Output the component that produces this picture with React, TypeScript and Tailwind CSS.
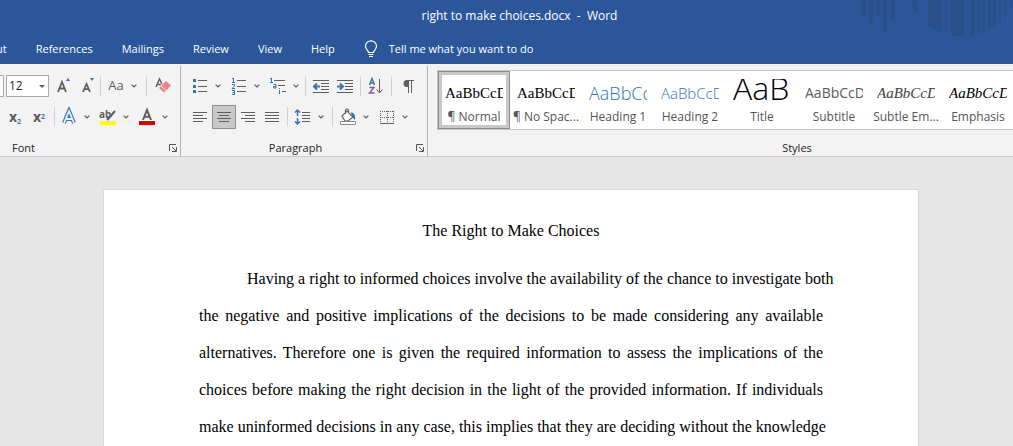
import type { ReactNode } from 'react';

const tabs = ['ut', 'References', 'Mailings', 'Review', 'View', 'Help'];

const styles = [
  { name: '¶ Normal', sample: 'AaBbCcD', look: 'font-["Liberation_Serif",serif] text-[15px] leading-7 text-black' },
  { name: '¶ No Spac...', sample: 'AaBbCcD', look: 'font-["Liberation_Serif",serif] text-[15px] leading-7 text-black' },
  { name: 'Heading 1', sample: 'AaBbCc', look: 'font-light text-[18px] leading-7 text-[#2e74b5]' },
  { name: 'Heading 2', sample: 'AaBbCcD', look: 'font-light text-[15px] leading-7 text-[#2e74b5]' },
  { name: 'Title', sample: 'AaB', look: 'font-light text-[32px] leading-[18px] text-black' },
  { name: 'Subtitle', sample: 'AaBbCcD', look: 'text-[14px] leading-7 text-[#5a5a5a]' },
  { name: 'Subtle Em...', sample: 'AaBbCcD', look: 'font-["Liberation_Serif",serif] italic text-[15px] leading-7 text-[#404040]' },
  { name: 'Emphasis', sample: 'AaBbCcD', look: 'font-["Liberation_Serif",serif] italic text-[15px] leading-7 text-black' },
];

const lines = [
  'Having a right to informed choices involve the availability of the chance to investigate both',
  'the negative and positive implications of the decisions to be made considering any available',
  'alternatives. Therefore one is given the required information to assess the implications of the',
  'choices before making the right decision in the light of the provided information. If individuals',
  'make uninformed decisions in any case, this implies that they are deciding without the knowledge',
];

const G = '#5f5f5f';
const B = '#3b73af';

function Icon({ children }: { children: ReactNode }) {
  return (
    <svg width="20" height="20" viewBox="0 0 20 20" fill="none" stroke={G} className="shrink-0">
      {children}
    </svg>
  );
}

function Tool({ label, active, children }: { label: string; active?: boolean; children: ReactNode }) {
  return (
    <button
      aria-label={label}
      className={`flex h-6 w-6 shrink-0 items-center justify-center ${active ? 'border border-[#8f8f8f] bg-[#c8c8c8]' : ''}`}
    >
      {children}
    </button>
  );
}

function Chevron({ label }: { label: string }) {
  return (
    <button aria-label={label} className="flex h-6 w-3 shrink-0 items-center justify-center">
      <svg width="6" height="4" viewBox="0 0 6 4" fill="none" stroke={G} strokeWidth="1.2">
        <path d="M.6.6 3 3 5.4.6" />
      </svg>
    </button>
  );
}

function Sep() {
  return <div className="h-5 w-px shrink-0 bg-[#d2d2d2]" />;
}

function Launcher({ label }: { label: string }) {
  return (
    <button aria-label={label} className="flex items-center">
      <svg width="8" height="8" viewBox="0 0 8 8" fill="none" stroke="#555">
        <path d="M.5 7V.5H7M3 3l4 4M7.5 3v4.5H3" />
      </svg>
    </button>
  );
}

// Horizontal text lines, given as [y, x1, x2]
function Lines({ rows }: { rows: number[][] }) {
  return <path d={rows.map(([y, a, b]) => `M${a} ${y}H${b}`).join('')} />;
}

function Art() {
  return (
    <svg width="152" height="38" viewBox="0 0 152 38" fill="#2a5089" aria-hidden="true" className="absolute top-0 right-0">
      <path d="M1 0h4v16H1zM8 0h4v23H8zM15 0h4v16h-4zM22 0h4v32h-4zM30 0h4v20h-4zM49 0h7v14l-3-4-1-5z" />
      <path d="M67 0h13v32l-13-6zM90 0h13v36H90zM110 0h4v35h-4zM116 0h3v34h-3zM121 0h3v32h-3zM127 0h3v29h-3zM132 0h3v27h-3zM138 0h2v23h-2zM143 0h2v18h-2zM149 0h2v10h-2z" />
      <path d="M82 0h6v34l-6-2z" opacity=".3" />
    </svg>
  );
}

function FontGroup() {
  return (
    <section className="flex w-[181px] shrink-0 flex-col border-r border-[#b4b4b4]">
      <div className="flex h-[39px] items-center">
        <div className="h-[22px] w-1 shrink-0 border border-l-0 border-[#ababab] bg-white" />
        <div className="relative ml-[2px] h-[22px] w-[43px] shrink-0">
          <select
            aria-label="Font size"
            className="h-full w-full appearance-none border border-[#ababab] bg-white pl-[2px] text-xs text-[#262626]"
          >
            <option>12</option>
          </select>
          <svg width="6" height="3" viewBox="0 0 6 3" fill={G} className="pointer-events-none absolute top-[10px] right-1">
            <path d="M0 0h6L3 3z" />
          </svg>
        </div>
        <div className="ml-[3px] flex">
          <Tool label="Increase font size">
            <Icon>
              <path d="M4 16 8 6l4 10M5.4 12.5h5.2" strokeWidth="1.8" />
              <path d="M12 5l2-3 2 3z" fill={B} stroke="none" />
            </Icon>
          </Tool>
          <Tool label="Decrease font size">
            <Icon>
              <path d="M5 16l3.5-8L12 16M6.2 13.2h4.6" strokeWidth="1.8" />
              <path d="M12 2l2 3 2-3z" fill={B} stroke="none" />
            </Icon>
          </Tool>
        </div>
        <Sep />
        <button aria-label="Change case" className="ml-[3px] h-6 w-6 text-[13px] text-[#5f5f5f]">
          Aa
        </button>
        <Chevron label="Change case options" />
        <div className="ml-[6px] flex items-center gap-1">
          <Sep />
          <Tool label="Clear formatting">
            <Icon>
              <path d="M3 11l3.5-8L9 8M4.2 8.5H8" strokeWidth="1.4" />
              <path d="M13 5l5 4.5-7 7L6 12z" fill="#e8828f" stroke="none" />
              <path d="M8 10l5 4.5" stroke="#fbe3e6" />
            </Icon>
          </Tool>
        </div>
      </div>
      <div className="flex h-6 items-center pl-[3px]">
        <button aria-label="Subscript" className="h-6 w-6 text-[14px] leading-6 font-bold text-[#5a5a5a]">
          x<sub className="text-[7px] text-[#3b73af]">2</sub>
        </button>
        <button aria-label="Superscript" className="mr-[3px] h-6 w-6 text-[14px] leading-6 font-bold text-[#5a5a5a]">
          x<sup className="text-[7px] text-[#3b73af]">2</sup>
        </button>
        <Sep />
        <div className="ml-[2px] flex">
          <Tool label="Text effects">
            <Icon>
              <path d="M5 16 10 4l5 12M7 12h6" stroke={B} strokeWidth="4" />
              <path d="M5 16 10 4l5 12M7 12h6" stroke="#e6eff9" strokeWidth="1.8" />
            </Icon>
          </Tool>
          <Chevron label="Text effects options" />
        </div>
        <div className="ml-[3px] flex">
          <Tool label="Highlight">
            <Icon>
              <text x="1" y="11" fontSize="10" fontWeight="bold" fill={G} stroke="none">ab</text>
              <path d="M17 4l-6 7-2 2" strokeWidth="2" />
              <path d="M2 14h16v4H2z" fill="#ff0" stroke="none" />
            </Icon>
          </Tool>
          <Chevron label="Highlight colours" />
        </div>
        <div className="ml-[3px] flex">
          <Tool label="Font colour">
            <Icon>
              <path d="M6 13l4-10 4 10M7.4 9.8h5.2" strokeWidth="2" />
              <path d="M2 14h16v4H2z" fill="#e00000" stroke="none" />
            </Icon>
          </Tool>
          <Chevron label="Font colours" />
        </div>
      </div>
      <div className="mt-[11px] flex h-4 items-center justify-between pr-[3px] pl-3">
        <h2>Font</h2>
        <Launcher label="Font settings" />
      </div>
    </section>
  );
}

function ParagraphGroup() {
  return (
    <section className="flex w-[247px] shrink-0 flex-col border-r border-[#b4b4b4]">
      <div className="flex h-[39px] items-center gap-[3px] pl-[7px]">
        <div className="flex">
          <Tool label="Bullets">
            <Icon>
              <Lines rows={[[4.5, 8, 17], [10.5, 8, 17], [15.5, 8, 17]]} />
              <path d="M3 3h3v3H3zM3 9h3v3H3zM3 14h3v3H3z" fill={B} stroke="none" />
            </Icon>
          </Tool>
          <Chevron label="Bullet library" />
        </div>
        <div className="flex">
          <Tool label="Numbering">
            <Icon>
              <Lines rows={[[4.5, 8, 17], [10.5, 8, 17], [15.5, 8, 17]]} />
              <path d="M3 3l1.5-1v4M3 6.5h3M3 8.5h2.5V10L3 12.5h3M3 14.5h2.5v4H3M3.5 16.5h2" stroke={B} />
            </Icon>
          </Tool>
          <Chevron label="Numbering library" />
        </div>
        <div className="flex">
          <Tool label="Multilevel list">
            <Icon>
              <Lines rows={[[4.5, 6, 17], [9.5, 10, 17], [15.5, 14, 18]]} />
              <path d="M2 3l1.5-1v4M2 6.5h3M5.5 8.5H8V12H5.5v-1.5H8M11.5 14v4M11.5 12v1" stroke={B} />
            </Icon>
          </Tool>
          <Chevron label="Multilevel library" />
        </div>
        <Sep />
        <div className="flex">
          <Tool label="Decrease indent">
            <Icon>
              <Lines rows={[[4.5, 2, 18], [7.5, 10, 18], [10.5, 10, 18], [13.5, 10, 18], [16.5, 2, 18]]} />
              <path d="M9 10.5H3M6 7.5l-3 3 3 3" stroke={B} strokeWidth="2" />
            </Icon>
          </Tool>
          <Tool label="Increase indent">
            <Icon>
              <Lines rows={[[4.5, 2, 18], [7.5, 10, 18], [10.5, 10, 18], [13.5, 10, 18], [16.5, 2, 18]]} />
              <path d="M2 10.5h6M5 7.5l3 3-3 3" stroke={B} strokeWidth="2" />
            </Icon>
          </Tool>
        </div>
        <Sep />
        <Tool label="Sort">
          <Icon>
            <path d="M3.5 9 6 2.5 8.5 9M4.5 7h3" stroke={B} strokeWidth="1.4" />
            <path d="M3.5 11.5H8L3.5 17h5" stroke="#8a52a8" strokeWidth="1.4" />
            <path d="M13.5 3v14M10.5 13.5l3 3.5 3-3.5" />
          </Icon>
        </Tool>
        <Sep />
        <Tool label="Show marks">
          <Icon>
            <path d="M11.5 4v13M14.5 4v13M10 4.5h7" />
            <path d="M11.5 4H10a3.5 3.5 0 0 0 0 7h1.5z" fill={G} stroke="none" />
          </Icon>
        </Tool>
      </div>
      <div className="flex h-6 items-center gap-[3px] pl-[7px]">
        <div className="flex">
          <Tool label="Align left">
            <Icon><Lines rows={[[5.5, 3, 17], [8.5, 3, 13], [11.5, 3, 17], [14.5, 3, 13]]} /></Icon>
          </Tool>
          <Tool label="Center" active>
            <Icon><Lines rows={[[5.5, 3, 17], [8.5, 5, 15], [11.5, 3, 17], [14.5, 5, 15]]} /></Icon>
          </Tool>
          <Tool label="Align right">
            <Icon><Lines rows={[[5.5, 3, 17], [8.5, 7, 17], [11.5, 3, 17], [14.5, 7, 17]]} /></Icon>
          </Tool>
          <Tool label="Justify">
            <Icon><Lines rows={[[5.5, 3, 17], [8.5, 3, 17], [11.5, 3, 17], [14.5, 3, 17]]} /></Icon>
          </Tool>
        </div>
        <Sep />
        <div className="mr-[2px] flex">
          <Tool label="Line spacing">
            <Icon>
              <Lines rows={[[5.5, 9, 17], [8.5, 9, 17], [11.5, 9, 17], [14.5, 9, 17]]} />
              <path d="M4.5 3v6M2 5.5 4.5 3 7 5.5M4.5 11v6M2 14.5 4.5 17 7 14.5" stroke={B} strokeWidth="1.5" />
            </Icon>
          </Tool>
          <Chevron label="Line spacing options" />
        </div>
        <Sep />
        <div className="flex">
          <Tool label="Shading">
            <Icon>
              <path d="M4 9l5-5 6 6-5 4H7zM7.5 7V3q1.5-2 3 0v3" fill="#fff" strokeWidth="1.2" />
              <path d="M13 5q5 1 4 8l-3-3z" fill={B} stroke="none" />
              <path d="M2.5 14.5h15v3h-15z" fill="#fff" stroke="#8a8a8a" />
            </Icon>
          </Tool>
          <Chevron label="Shading colours" />
        </div>
        <div className="flex">
          <Tool label="Borders">
            <Icon>
              <path d="M3 4.5h14M3 10.5h14M3.5 4v12M10.5 4v12M16.5 4v12" strokeDasharray="1 1" />
              <path d="M3 16.5h14" />
            </Icon>
          </Tool>
          <Chevron label="Border options" />
        </div>
      </div>
      <div className="mt-[11px] flex h-4 items-center pr-[3px]">
        <h2 className="flex-1 pr-[6px] text-center">Paragraph</h2>
        <Launcher label="Paragraph settings" />
      </div>
    </section>
  );
}

function StylesGroup() {
  return (
    <section className="flex w-[729px] shrink-0 flex-col pl-[9px]">
      <div className="mt-1 flex h-[60px] border border-r-0 border-[#c6c6c6] bg-white">
        {styles.map((s, i) => (
          <button
            key={s.name}
            className={`flex w-[72px] shrink-0 flex-col items-center ${
              i === 0 ? 'shadow-[inset_0_0_0_1px_#8c8c8c,inset_0_0_0_4px_#c8c8c8]' : ''
            }`}
          >
            <span className={`mt-2 h-7 w-[58px] overflow-hidden text-left ${s.look}`}>{s.sample}</span>
            <span className="text-xs leading-5 whitespace-nowrap text-[#555]">{s.name}</span>
          </button>
        ))}
      </div>
      <h2 className="mt-[10px] flex h-4 items-center justify-center">Styles</h2>
    </section>
  );
}

export default function App() {
  return (
    <div className='flex h-screen flex-col overflow-hidden bg-[#e6e6e6] font-["Open_Sans","Noto_Sans",sans-serif] text-[11px] text-[#262626]'>
      <header className="relative h-16 shrink-0 bg-[#2b579a] text-white">
        <Art />
        <h1 className="flex h-8 items-center justify-center pl-[26px] text-xs whitespace-pre">right to make choices.docx  -  Word</h1>
        <nav className="-ml-1 flex h-8 items-center gap-[29px] pt-[2px]">
          {tabs.map((t) => (
            <button key={t}>{t}</button>
          ))}
          <button className="flex items-center gap-[11px]">
            <svg width="14" height="18" viewBox="0 0 14 18" fill="none" stroke="#fff" strokeWidth="1.2">
              <path d="M4.5 12.5c0-2-3-3-3-6.2a5.5 5.5 0 0 1 11 0c0 3.2-3 4.2-3 6.2zM4.5 14.5h5M5 16.5h4" />
            </svg>
            Tell me what you want to do
          </button>
        </nav>
      </header>

      <div className="flex h-[93px] shrink-0 overflow-hidden border-b border-[#c8c8c8] bg-[#f3f3f3] pt-[2px]">
        <FontGroup />
        <ParagraphGroup />
        <StylesGroup />
      </div>

      <main className="flex flex-1 justify-center pt-[33px] pl-[9px]">
        <article className='w-full max-w-[814px] bg-white px-[95px] pt-[22px] font-["Liberation_Serif",serif] text-base leading-[37px] text-black shadow-[0_0_1px_#999]'>
          <h2 className="text-center">The Right to Make Choices</h2>
          <p className="mt-[11px] text-justify whitespace-nowrap [text-align-last:justify]">
            {lines.map((line, i) => (
              <span key={line} className={`block ${i === 0 ? 'pl-12' : ''}`}>
                {line}
              </span>
            ))}
          </p>
        </article>
      </main>
    </div>
  );
}
